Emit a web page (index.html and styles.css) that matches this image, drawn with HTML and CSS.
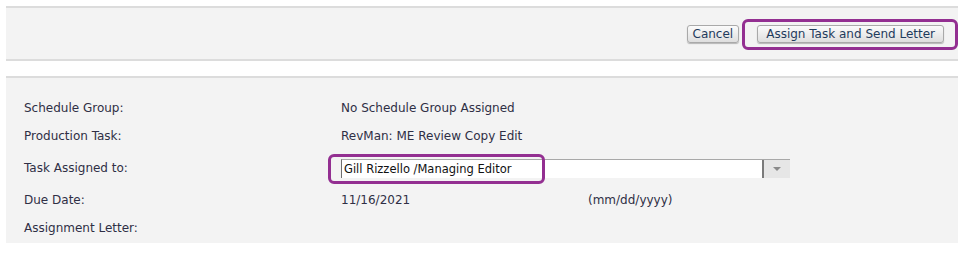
FILE: index.html
```html
<!DOCTYPE html>
<html lang="en">
<head>
  <meta charset="UTF-8">
  <title>Assign Task</title>
  <link rel="stylesheet" href="styles.css">
</head>
<body>
  <div class="page">
    <!-- Barre d'actions -->
    <div class="action-bar">
      <button type="button" class="btn btn-cancel">Cancel</button>
      <span class="highlight-wrap">
        <button type="button" class="btn btn-assign">Assign Task and Send Letter</button>
        <span class="highlight highlight-assign"></span>
      </span>
    </div>

    <!-- Détails de la tâche -->
    <div class="task-panel">
      <div class="task-row row-1">
        <span class="task-label">Schedule Group:</span>
        <span class="task-value">No Schedule Group Assigned</span>
      </div>
      <div class="task-row row-2">
        <span class="task-label">Production Task:</span>
        <span class="task-value">RevMan: ME Review Copy Edit</span>
      </div>
      <div class="task-row row-3">
        <span class="task-label">Task Assigned to:</span>
        <div class="select-box">
          <span class="select-text">Gill Rizzello /Managing Editor</span>
          <span class="select-arrow"></span>
          <span class="highlight highlight-select"></span>
        </div>
      </div>
      <div class="task-row row-4">
        <span class="task-label">Due Date:</span>
        <span class="task-value date-value">11/16/2021</span>
        <span class="task-value date-format">(mm/dd/yyyy)</span>
      </div>
      <div class="task-row row-5">
        <span class="task-label">Assignment Letter:</span>
      </div>
    </div>
  </div>
</body>
</html>
```

FILE: styles.css
```css
:root {
  --panel-bg: #f3f3f3;
  --panel-line: #dcdcdc;
  --text-color: #2f2f45;
  --button-text: #1f3b5c;
  --highlight: #932f91;
}

body {
  margin: 0;
  background-color: #ffffff;
  font-family: "DejaVu Sans", Verdana, sans-serif;
  font-size: 12px;
  color: var(--text-color);
}

.page {
  padding: 6px 6px 0 6px;
}

/* Barre d'actions */
.action-bar {
  display: flex;
  justify-content: flex-end;
  align-items: center;
  height: 51px;
  padding-right: 14px;
  background-color: var(--panel-bg);
  border-top: 2px solid var(--panel-line);
  border-bottom: 2px solid var(--panel-line);
  margin-bottom: 15px;
}

.btn {
  font-family: "DejaVu Sans", sans-serif;
  font-size: 12px;
  color: var(--button-text);
  height: 18px;
  padding: 0 6px;
  border: 1px solid #a9a9a9;
  border-radius: 3px;
  background: linear-gradient(#fbfbfb, #dedede);
  box-shadow: 0 1px 1px rgba(0, 0, 0, 0.25);
  line-height: 14px;
  cursor: pointer;
}

.btn-cancel {
  padding: 0 5px;
  margin-right: 18px;
}

.btn-assign {
  padding: 0 8px;
}

.highlight-wrap {
  position: relative;
  display: inline-flex;
}

.highlight {
  position: absolute;
  border: 3px solid var(--highlight);
  border-radius: 6px;
  pointer-events: none;
}

.highlight-assign {
  left: -15px;
  right: -14px;
  top: -6px;
  bottom: -7px;
}

/* Détails de la tâche */
.task-panel {
  background-color: var(--panel-bg);
  border-top: 2px solid var(--panel-line);
  padding: 15px 0 1px 18px;
}

.task-row {
  display: flex;
  align-items: center;
}

.row-1 { height: 29px; }
.row-2 { height: 28px; }
.row-3 { height: 36px; }
.row-4 { height: 28px; }
.row-5 { height: 28px; }

.task-label {
  width: 317px;
  flex-shrink: 0;
}

.date-value {
  width: 247px;
}

.select-box {
  position: relative;
  display: flex;
  align-items: center;
  width: 449px;
  height: 19px;
  background-color: #ffffff;
  border-top: 1px solid #a8a8a8;
  border-left: 1px solid #6f6f6f;
  box-sizing: border-box;
}

.select-text {
  flex: 1;
  padding-left: 2px;
  font-size: 11.5px;
  color: #111111;
}

.select-arrow {
  width: 26px;
  height: 100%;
  border-left: 2px solid #7b7b7b;
  background-color: #e6e6e6;
  display: flex;
  justify-content: center;
  align-items: center;
}

.select-arrow::after {
  content: "";
  border-left: 4px solid transparent;
  border-right: 4px solid transparent;
  border-top: 4px solid #8a8a8a;
}

.highlight-select {
  left: -14px;
  top: -6px;
  width: 211px;
  height: 24px;
}
```
